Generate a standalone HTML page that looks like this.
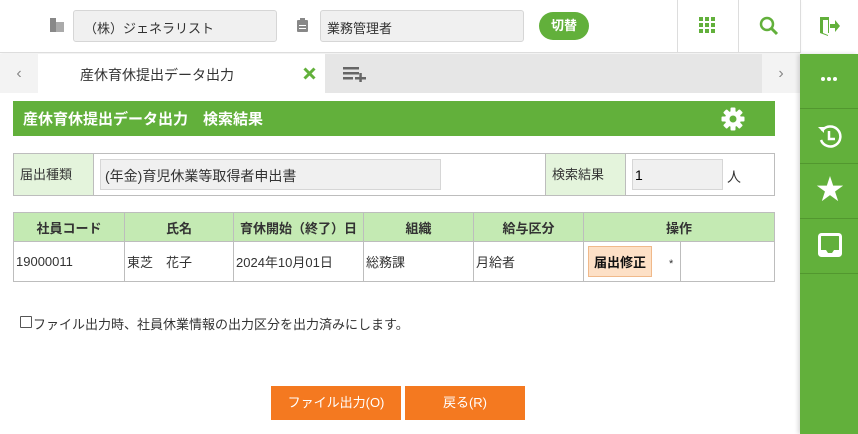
<!DOCTYPE html>
<html><head><meta charset="utf-8"><style>
*{margin:0;padding:0;box-sizing:border-box}
body{width:858px;height:434px;overflow:hidden;background:#fff;font-family:"Liberation Sans","Noto Sans CJK JP",sans-serif;font-size:13px;color:#333;position:relative}
.a{position:absolute}
.inp{background:#f0f0f0;border:1px solid #d6d6d6;border-radius:3px}
table{border-collapse:collapse;position:absolute}
td{border:1px solid #bdbdbd}
.gr{background:#62b03b}
</style></head><body>
<div class="a" style="left:0;top:0;width:800px;height:53px;border-bottom:1px solid #ddd;box-shadow:0 1px 3px rgba(0,0,0,.08)"></div>
<svg class="a" style="left:49px;top:17px" width="16" height="16"><rect x="1" y="1" width="6" height="14" fill="#888"/><rect x="7" y="5" width="8" height="10" fill="#aaa"/></svg>
<div class="a inp" style="left:73px;top:10px;width:204px;height:32px;padding:7px 10px;font-size:13px">（株）ジェネラリスト</div>
<svg class="a" style="left:296px;top:17px" width="14" height="16"><rect x="1" y="3" width="11" height="12" rx="1" fill="#888"/><rect x="4" y="1" width="5" height="4" fill="#888"/><rect x="3" y="8" width="7" height="1" fill="#fff"/><rect x="3" y="11" width="7" height="1" fill="#fff"/></svg>
<div class="a inp" style="left:320px;top:10px;width:204px;height:32px;padding:7px 6px">業務管理者</div>
<div class="a gr" style="left:539px;top:12px;width:50px;height:28px;border-radius:14px;color:#fff;text-align:center;line-height:28px;font-weight:bold">切替</div>
<div class="a" style="left:677px;top:0;width:1px;height:53px;background:#ddd"></div>
<div class="a" style="left:738px;top:0;width:1px;height:53px;background:#ddd"></div>
<div class="a" style="left:800px;top:0;width:1px;height:53px;background:#ddd"></div>
<svg class="a" style="left:699px;top:17px" width="18" height="18" fill="#62b03b"><rect x="0" y="0" width="4" height="4"/><rect x="6" y="0" width="4" height="4"/><rect x="12" y="0" width="4" height="4"/><rect x="0" y="6" width="4" height="4"/><rect x="6" y="6" width="4" height="4"/><rect x="12" y="6" width="4" height="4"/><rect x="0" y="12" width="4" height="4"/><rect x="6" y="12" width="4" height="4"/><rect x="12" y="12" width="4" height="4"/></svg>
<svg class="a" style="left:759px;top:16px" width="20" height="20"><circle cx="8" cy="8" r="6" stroke="#62b03b" stroke-width="2.5" fill="none"/><line x1="12" y1="12" x2="18" y2="18" stroke="#62b03b" stroke-width="3"/></svg>
<svg class="a" style="left:819px;top:15px" width="22" height="22" fill="#62b03b"><path d="M1 2h9v3H4v13l5 2V2h1v16H9v3L1 18z"/><path d="M11 9h5V5l5 6-5 6v-4h-5z"/></svg>
<div class="a" style="left:0;top:54px;width:800px;height:39px;background:#e6e6e6"></div>
<div class="a" style="left:0;top:54px;width:38px;height:39px;background:#f3f3f3;color:#888;text-align:center;line-height:39px;font-size:16px">‹</div>
<div class="a" style="left:38px;top:54px;width:287px;height:39px;background:#fff"></div>
<div class="a" style="left:80px;top:65px;font-size:14px">産休育休提出データ出力</div>
<svg class="a" style="left:303px;top:67px" width="13" height="13"><path d="M1.5 1.5L11.5 11.5M11.5 1.5L1.5 11.5" stroke="#62b03b" stroke-width="3"/></svg>
<svg class="a" style="left:343px;top:66px" width="24" height="16" fill="#666"><rect x="0" y="1" width="16" height="2.5"/><rect x="0" y="6" width="16" height="2.5"/><rect x="0" y="11" width="10" height="2.5"/><rect x="12" y="11" width="11" height="2.5"/><rect x="16.3" y="7" width="2.5" height="9"/></svg>
<div class="a" style="left:762px;top:54px;width:38px;height:39px;background:#f3f3f3;color:#888;text-align:center;line-height:39px;font-size:16px">›</div>
<div class="a gr" style="left:800px;top:54px;width:58px;height:380px;box-shadow:-2px 0 4px rgba(0,0,0,.15)"></div>
<div class="a" style="left:800px;top:108px;width:58px;height:1px;background:#52972f"></div>
<div class="a" style="left:800px;top:163px;width:58px;height:1px;background:#52972f"></div>
<div class="a" style="left:800px;top:218px;width:58px;height:1px;background:#52972f"></div>
<div class="a" style="left:800px;top:273px;width:58px;height:1px;background:#52972f"></div>
<svg class="a" style="left:820px;top:76px" width="18" height="6" fill="#fff"><circle cx="3" cy="3" r="2"/><circle cx="9" cy="3" r="2"/><circle cx="15" cy="3" r="2"/></svg>
<svg class="a" style="left:817px;top:122px" width="26" height="28"><path d="M5 9A10 10 0 1 1 4 18" stroke="#fff" stroke-width="2.5" fill="none"/><path d="M1 5l6 0 0 6z" fill="#fff"/><path d="M12 9v8h6" stroke="#fff" stroke-width="2.5" fill="none"/></svg>
<div class="a" style="left:816px;top:174px;color:#fff;font-size:28px;line-height:32px">★</div>
<svg class="a" style="left:818px;top:233px" width="24" height="26"><rect x="1.5" y="1.5" width="21" height="21" rx="2" stroke="#fff" stroke-width="3" fill="none"/><path d="M2 17h6l2 3h4l2-3h6v6H2z" fill="#fff"/></svg>
<div class="a gr" style="left:13px;top:101px;width:762px;height:35px"></div>
<div class="a" style="left:23px;top:108px;color:#fff;font-weight:bold;font-size:15px">産休育休提出データ出力　検索結果</div>
<svg class="a" style="left:721px;top:107px" width="24" height="24" viewBox="0 0 24 24"><g fill="#fff"><circle cx="12" cy="12" r="8"/><g id="t"><rect x="9.5" y="0.5" width="5" height="23" rx="1"/></g><rect x="9.5" y="0.5" width="5" height="23" rx="1" transform="rotate(45 12 12)"/><rect x="9.5" y="0.5" width="5" height="23" rx="1" transform="rotate(90 12 12)"/><rect x="9.5" y="0.5" width="5" height="23" rx="1" transform="rotate(135 12 12)"/></g><circle cx="12" cy="12" r="3.5" fill="#62b03b"/></svg>
<div class="a" style="left:13px;top:153px;width:762px;height:43px;border:1px solid #bdbdbd"></div>
<div class="a" style="left:14px;top:154px;width:80px;height:41px;background:#e4f4dc;border-right:1px solid #bdbdbd;padding:10px 6px">届出種類</div>
<div class="a inp" style="left:100px;top:159px;width:341px;height:31px;border-radius:0;padding:6px 4px;font-size:14px">(年金)育児休業等取得者申出書</div>
<div class="a" style="left:545px;top:154px;width:81px;height:41px;background:#e4f4dc;border-left:1px solid #bdbdbd;border-right:1px solid #bdbdbd;padding:10px 6px">検索結果</div>
<div class="a inp" style="left:632px;top:159px;width:91px;height:31px;border-radius:0;padding:7px 2px;font-size:14px;color:#000">1</div>
<div class="a" style="left:727px;top:167px;font-size:14px">人</div>
<table style="left:13px;top:212px;width:762px">
<tr style="background:#c4eab3;height:29px;font-weight:bold;text-align:center;font-size:13px">
<td style="width:111px">社員コード</td><td style="width:109px">氏名</td><td style="width:130px">育休開始（終了）日</td><td style="width:110px">組織</td><td style="width:110px">給与区分</td><td colspan="2">操作</td></tr>
<tr style="height:40px">
<td style="padding-left:2px">19000011</td><td style="padding-left:2px">東芝　花子</td><td style="padding-left:2px">2024年10月01日</td><td style="padding-left:2px">総務課</td><td style="padding-left:2px">月給者</td>
<td style="width:97px;padding-left:4px"><span style="display:inline-block;background:#fde0c6;border:1px solid #f0b98a;padding:5px 5px;font-weight:bold;color:#111">届出修正</span><span style="margin-left:17px;font-size:11px">*</span></td><td></td></tr>
</table>
<div class="a" style="left:20px;top:316px;width:12px;height:12px;border:1px solid #555;border-radius:1px"></div>
<div class="a" style="left:33px;top:314px">ファイル出力時、社員休業情報の出力区分を出力済みにします。</div>
<div class="a" style="left:271px;top:386px;width:130px;height:34px;background:#f47920;color:#fff;text-align:center;line-height:34px">ファイル出力(O)</div>
<div class="a" style="left:405px;top:386px;width:120px;height:34px;background:#f47920;color:#fff;text-align:center;line-height:34px">戻る(R)</div>
</body></html>
